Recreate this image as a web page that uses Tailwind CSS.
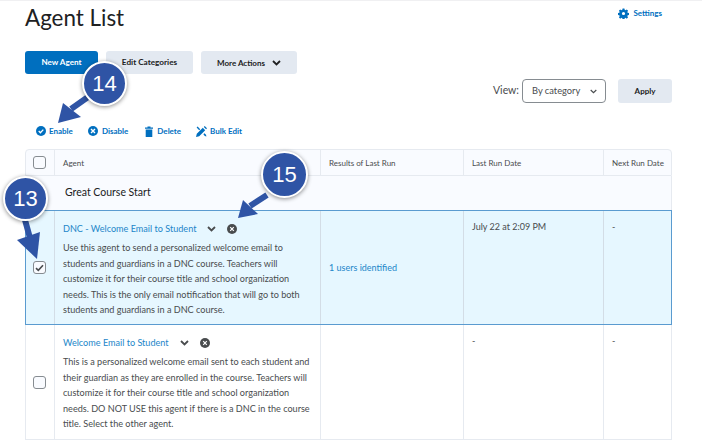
<!DOCTYPE html>
<html lang="en">
<head>
  <meta charset="UTF-8">
  <title>Agent List</title>
  <script src="https://cdn.jsdelivr.net/npm/@tailwindcss/browser@4"></script>
</head>
<body class="bg-white font-['Lato','Noto_Sans',sans-serif] text-[#494c4e] overflow-hidden">
  <div class="relative w-[702px] h-[441px] overflow-hidden border-t border-[#f0f0f2]">
    <div class="px-[25px] w-[697px]">
      <div class="flex justify-between h-[50px]">
        <h1 class="text-[22.400px] leading-[34px] text-[#202122]">Agent List</h1>
        <a class="flex items-center gap-[4px] h-[24px] mr-[10px] text-[8px] font-bold text-[#006fbf]">
          <svg class="w-[11px] h-[11px]" viewBox="0 0 24 24" fill="#006fbf"><path fill-rule="evenodd" d="M10 1h4l.6 3 2 .9 2.600-1.700 2.800 2.800-1.700 2.600.9 2 3 .6v4l-3 .6-.9 2 1.700 2.600-2.800 2.800-2.600-1.700-2 .9-.6 3h-4l-.6-3-2-.9-2.600 1.700-2.800-2.800 1.700-2.600-.9-2-3-.6v-4l3-.6.9-2-1.700-2.600 2.800-2.800 2.600 1.700 2-.9zM12 8.500a3.500 3.500 0 1 0 0 7 3.500 3.500 0 0 0 0-7z"/></svg>
          Settings
        </a>
      </div>
      <div class="flex gap-[8px] h-[28px]">
        <button class="w-[73px] h-[23px] rounded-[3px] bg-[#006fbf] text-white text-[8.100px] font-bold">New Agent</button>
        <button class="w-[87px] h-[23px] rounded-[3px] bg-[#e3e9f1] text-[#202122] text-[8.200px] font-bold">Edit Categories</button>
        <button class="w-[96px] h-[23px] rounded-[3px] bg-[#e3e9f1] text-[#202122] text-[8px] font-bold flex items-center justify-center gap-[7px]">
          More Actions
          <svg class="w-[9px] h-[6px]" viewBox="0 0 9 6" fill="none" stroke="#202122" stroke-width="1.800"><path d="M1 1l3.500 3.500L8 1"/></svg>
        </button>
      </div>
      <div class="flex justify-end items-center h-[24px]">
        <span class="text-[10.500px] mr-[3px]">View:</span>
        <div class="w-[84px] h-[24px] rounded-[4px] border border-[#868c91] flex items-center justify-between pl-[9px] pr-[8px] text-[9.300px]">
          By category
          <svg class="w-[7px] h-[5px]" viewBox="0 0 7 5" fill="none" stroke="#494c4e" stroke-width="1.200"><path d="M.7 1l2.800 2.600L6.300 1"/></svg>
        </div>
        <button class="w-[54px] h-[24px] ml-[12px] rounded-[3px] bg-[#e3e9f1] text-[#202122] text-[8px] font-bold">Apply</button>
      </div>
      <div class="flex items-center h-[46px] pl-[11px] pt-[10px] text-[8px] font-bold text-[#006fbf]">
        <span class="flex items-center gap-[3px] mr-[15px]">
          <svg class="w-[10px] h-[10px]" viewBox="0 0 10 10"><circle cx="5" cy="5" r="5" fill="#006fbf"/><path d="M2.700 5l1.700 1.700L7.300 3.600" fill="none" stroke="#fff" stroke-width="1.300"/></svg>
          Enable
        </span>
        <span class="flex items-center gap-[4px] mr-[17px]">
          <svg class="w-[10px] h-[10px]" viewBox="0 0 10 10"><circle cx="5" cy="5" r="5" fill="#006fbf"/><path d="M3 3l4 4M7 3L3 7" stroke="#fff" stroke-width="1.400"/></svg>
          Disable
        </span>
        <span class="flex items-center gap-[4px] mr-[15px]">
          <svg class="w-[8px] h-[11px]" viewBox="0 0 8 11" fill="#006fbf"><path d="M0 1.500h2.500V.4h3v1.100H8v1.300H0zM.7 3.500h6.600V11H.7z"/></svg>
          Delete
        </span>
        <span class="flex items-center gap-[3px]">
          <svg class="w-[11px] h-[11px]" viewBox="0 0 11 11" fill="#006fbf"><path d="M0 11l.8-3.200L6.800 1.800l2.400 2.400L3.200 10.200zM7.800.9L8.700 0 11 2.300l-.9.900zM.6 1.600l1-1 2.600 2.600-1 1zM7.400 8.200l1-1L10 8.800 10.400 10.400 8.800 10z"/></svg>
          Bulk Edit
        </span>
      </div>

      <div class="w-[647px] text-[8px]">
        <div class="grid grid-cols-[29px_266px_143px_140px_67px] h-[27px] bg-[#f9fbff] border border-[#e6eaf0] rounded-t-[4px] items-center">
          <div class="h-full flex items-center justify-center pr-[1px] border-r border-[#e6eaf0]"><span class="w-[13px] h-[13px] rounded-[3px] border border-[#868c91] bg-[#f9fbff]"></span></div>
          <div class="h-full flex items-center pl-[8px] border-r border-[#e6eaf0]">Agent</div>
          <div class="h-full flex items-center pl-[8px] border-r border-[#e6eaf0]">Results of Last Run</div>
          <div class="h-full flex items-center pl-[8px] border-r border-[#e6eaf0]">Last Run Date</div>
          <div class="h-full flex items-center pl-[8px]">Next Run Date</div>
        </div>
        <div class="h-[34px] bg-[#f9fbff] border-x border-[#e6eaf0] flex items-center pl-[39px] text-[10.500px] text-[#202122]">Great Course Start</div>

        <div class="grid grid-cols-[29px_266px_143px_140px_67px] h-[115px] bg-[#e6f7ff] border border-[#5a9bd0]">
          <div class="flex items-center justify-center pr-[1px] border-r border-[#d3dde6]">
            <span class="w-[13px] h-[13px] rounded-[3px] border border-[#868c91] bg-[#f9fbff] flex items-center justify-center">
              <svg class="w-[9px] h-[8px]" viewBox="0 0 9 8" fill="none" stroke="#494c4e" stroke-width="1.600"><path d="M1 4.200l2.300 2.200L8 1.300"/></svg>
            </span>
          </div>
          <div class="pl-[8px] pt-[8px] border-r border-[#d3dde6]">
            <div class="flex items-center h-[19px]">
              <a class="text-[9.100px] text-[#1c86c9]">DNC - Welcome Email to Student</a>
              <svg class="w-[9px] h-[6px] ml-[11px]" viewBox="0 0 9 6" fill="none" stroke="#494c4e" stroke-width="1.800"><path d="M1 1l3.500 3.500L8 1"/></svg>
              <svg class="w-[10px] h-[10px] ml-[11px]" viewBox="0 0 10 10"><circle cx="5" cy="5" r="5" fill="#494c4e"/><path d="M3.200 3.200l3.600 3.600M6.800 3.200L3.200 6.800" stroke="#fff" stroke-width="1.200"/></svg>
            </div>
            <p class="mt-[2px] text-[9.100px] leading-[15.600px] whitespace-nowrap">Use this agent to send a personalized welcome email to<br>students and guardians in a DNC course. Teachers will<br>customize it for their course title and school organization<br>needs. This is the only email notification that will go to both<br>students and guardians in a DNC course.</p>
          </div>
          <div class="flex items-center pl-[8px] text-[9px] text-[#1c86c9] border-r border-[#d3dde6]">1 users identified</div>
          <div class="pl-[8px] pt-[9px] text-[9px] border-r border-[#d3dde6]">July 22 at 2:09 PM</div>
          <div class="pl-[8px] pt-[9px] text-[9px]">-</div>
        </div>

        <div class="grid grid-cols-[29px_266px_143px_140px_67px] h-[115px] border-x border-b border-[#e6eaf0]">
          <div class="flex items-center justify-center pr-[1px] border-r border-[#e6eaf0]"><span class="w-[13px] h-[13px] rounded-[3px] border border-[#868c91] bg-[#f9fbff]"></span></div>
          <div class="pl-[8px] pt-[8px] border-r border-[#e6eaf0]">
            <div class="flex items-center h-[19px]">
              <a class="text-[9.100px] text-[#1c86c9]">Welcome Email to Student</a>
              <svg class="w-[9px] h-[6px] ml-[11px]" viewBox="0 0 9 6" fill="none" stroke="#494c4e" stroke-width="1.800"><path d="M1 1l3.500 3.500L8 1"/></svg>
              <svg class="w-[10px] h-[10px] ml-[11px]" viewBox="0 0 10 10"><circle cx="5" cy="5" r="5" fill="#494c4e"/><path d="M3.200 3.200l3.600 3.600M6.800 3.200L3.200 6.800" stroke="#fff" stroke-width="1.200"/></svg>
            </div>
            <p class="mt-[2px] text-[9.100px] leading-[15.600px] whitespace-nowrap">This is a personalized welcome email sent to each student and<br>their guardian as they are enrolled in the course. Teachers will<br>customize it for their course title and school organization<br>needs. DO NOT USE this agent if there is a DNC in the course<br>title. Select the other agent.</p>
          </div>
          <div class="border-r border-[#e6eaf0]"></div>
          <div class="pl-[8px] pt-[9px] text-[9px] border-r border-[#e6eaf0]">-</div>
          <div class="pl-[8px] pt-[9px] text-[9px]">-</div>
        </div>
      </div>
    </div>

    <!-- callouts -->
    <svg class="absolute left-0 top-[-1px] w-[702px] h-[441px] pointer-events-none" viewBox="0 0 702 441" fill="#2f54a5" stroke="none">
      <path d="M88 97L71 109" stroke="#2f54a5" stroke-width="6"/><path d="M58 123L63 103L81 117z"/>
      <path d="M267 195L250 206" stroke="#2f54a5" stroke-width="6"/><path d="M238 218L243 200L258 214z"/>
      <path d="M25 220L30 238" stroke="#2f54a5" stroke-width="6"/><path d="M37 259L17 240L40 232z"/>
    </svg>
    <div class="absolute left-[82px] top-[60px] w-[45px] h-[45px] rounded-full bg-[#2f54a5] border-2 border-white shadow-[0_1px_4px_rgba(0,0,0,0.45)] flex items-center justify-center text-white text-[22px] font-['Liberation_Sans',sans-serif]">14</div>
    <div class="absolute left-[261px] top-[150px] w-[47px] h-[47px] rounded-full bg-[#2f54a5] border-2 border-white shadow-[0_1px_4px_rgba(0,0,0,0.45)] flex items-center justify-center text-white text-[22px] font-['Liberation_Sans',sans-serif]">15</div>
    <div class="absolute left-[3px] top-[175px] w-[45px] h-[45px] rounded-full bg-[#2f54a5] border-2 border-white shadow-[0_1px_4px_rgba(0,0,0,0.45)] flex items-center justify-center text-white text-[22px] font-['Liberation_Sans',sans-serif]">13</div>
  </div>
</body>
</html>
